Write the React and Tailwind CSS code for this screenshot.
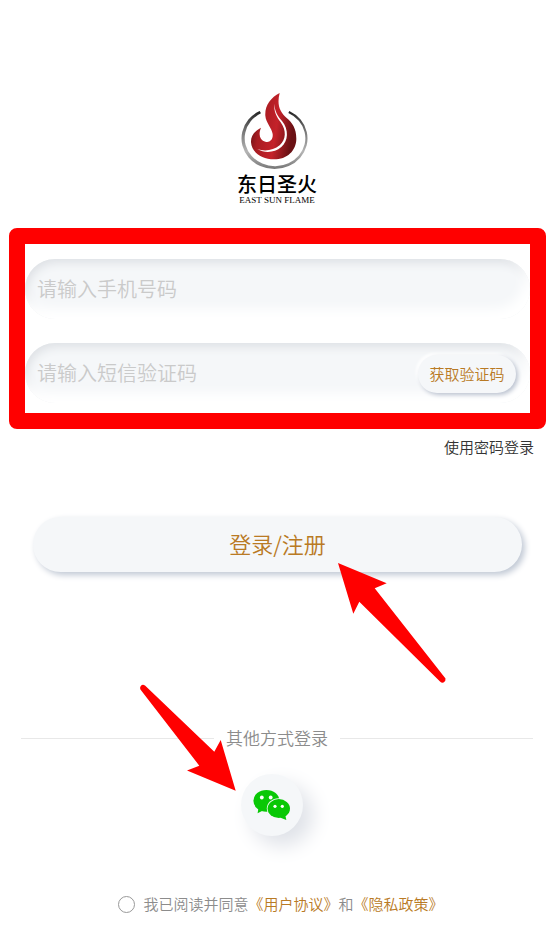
import React from 'react';

function FlameLogo() {
  return (
    <svg viewBox="54 28 207 231" className="h-[77px] w-[69px]" aria-hidden="true">
      <defs>
        <linearGradient id="ring" x1="0" y1="0" x2="0" y2="1">
          <stop offset="0" stopColor="#222" />
          <stop offset="0.35" stopColor="#777" />
          <stop offset="0.7" stopColor="#b5b5b5" />
          <stop offset="1" stopColor="#777" />
        </linearGradient>
        <linearGradient id="flame" x1="0" y1="0" x2="1" y2="0.25">
          <stop offset="0" stopColor="#4e0e12" />
          <stop offset="0.3" stopColor="#a81c22" />
          <stop offset="0.65" stopColor="#c4222a" />
          <stop offset="1" stopColor="#6a1114" />
        </linearGradient>
      </defs>
      <path d="M113 82 A99 92 0 1 0 202 82 L199 88 A91 84 0 1 1 117 89 Z" fill="url(#ring)" />
      <path
        d="M173 28 C146 42 128 66 130 96 C132 118 149 132 152 151 C154 168 143 178 130 174 C114 169 108 154 117 132 C98 142 86 156 87 176 C89 206 120 227 156 227 C195 227 223 201 223 165 C223 135 211 117 194 103 C173 85 164 63 173 28 Z"
        fill="url(#flame)"
      />
      <path
        d="M158 60 C157 82 168 98 180 112 C201 138 199 172 178 190 C158 207 130 209 106 197 C131 204 155 200 173 185 C192 168 194 141 176 116 C164 99 154 82 158 60 Z"
        fill="#fff"
      />
    </svg>
  );
}

function WechatIcon() {
  return (
    <svg viewBox="0 0 38 32" className="h-8 w-[38px]" aria-hidden="true">
      <g fill="#09c806">
        <ellipse cx="13.4" cy="11.8" rx="13" ry="10.9" />
        <path d="M5.5 19.1 L4.6 24.2 L11 21.1 Z" />
      </g>
      <ellipse cx="25.8" cy="19.6" rx="12" ry="10.3" fill="#f5f7f9" />
      <g fill="#09c806">
        <ellipse cx="25.8" cy="19.6" rx="11.2" ry="9.5" />
        <path d="M27 28.4 L33.3 30.9 L32.2 25.4 Z" />
      </g>
      <g fill="#fff">
        <circle cx="8.8" cy="8.5" r="1.9" />
        <circle cx="17.7" cy="8.5" r="1.9" />
        <circle cx="22" cy="17.3" r="1.6" />
        <circle cx="29.3" cy="17.3" r="1.6" />
      </g>
    </svg>
  );
}

const fieldClass =
  'h-15 w-full rounded-full bg-[#f5f7f9] pl-3 pb-0.5 text-xl font-[350] text-gray-700 outline-none placeholder:text-[#cacaca] shadow-[inset_-6px_-10px_12px_#ffffff,inset_2px_4px_10px_#dee1e5]';

export default function App() {
  return (
    <main
      lang="zh-CN"
      className="min-h-screen overflow-hidden bg-white pt-[93px] font-['Noto_Sans_CJK_SC',sans-serif] font-[350]"
    >
      <header className="flex flex-col items-center">
        <div className="pr-[6px]">
          <FlameLogo />
        </div>
        <h1 className="mt-1 text-xl leading-5 font-medium text-black">东日圣火</h1>
        <p className="font-['Liberation_Serif',serif] text-[9px] leading-3 font-normal text-black">EAST SUN FLAME</p>
      </header>

      <form onSubmit={(e) => e.preventDefault()}>
        <div className="mt-[22px] mr-2 ml-[9px] flex flex-col gap-6 rounded-lg border-16 border-[#ff0000] pt-[15px] pb-[10px]">
          <input type="tel" aria-label="手机号码" placeholder="请输入手机号码" className={fieldClass} />
          <div className="relative">
            <input type="text" aria-label="短信验证码" placeholder="请输入短信验证码" className={fieldClass} />
            <button
              type="button"
              className="absolute top-3 right-[14px] h-[38px] w-[98px] rounded-full bg-[#f5f7f9] text-[15px] text-[#b97a24] shadow-[2px_2px_4px_#bcc3d0,-2px_-2px_3px_#ffffff]"
            >
              获取验证码
            </button>
          </div>
        </div>

        <div className="mt-2 flex justify-end pr-5">
          <a href="#password" className="text-[15px] leading-5 text-[#333]">使用密码登录</a>
        </div>

        <div className="relative mt-[60px] mr-8 ml-[33px]">
          <button
            type="submit"
            className="h-[55px] w-full rounded-full bg-[#f5f7f9] pb-0.5 text-[22px] text-[#b97a24] shadow-[3px_3px_6px_#c0c8d4]"
          >
            登录/注册
          </button>
          <svg
            viewBox="338 563 110 122"
            className="pointer-events-none absolute top-[46px] left-1/2 ml-[60px] h-[122px] w-[110px]"
            aria-hidden="true"
          >
            <path
              d="M338 563 L386.7 583.3 L374.7 588.3 L445.5 678.5 Q446 681 443.5 682.6 Q441.5 683 440 681.5 L359.3 601.7 L353.3 613.7 Z"
              fill="#ff0000"
            />
          </svg>
        </div>
      </form>

      <section className="relative mt-[154px]">
        <div className="mx-[21px] flex items-center gap-3">
          <span className="h-px flex-1 bg-[#e8e8e8]" />
          <h2 className="text-[17px] leading-6 text-[#8c8c8c]">其他方式登录</h2>
          <span className="h-px flex-1 bg-[#e8e8e8]" />
        </div>
        <div className="mt-6 flex justify-center pr-[10px]">
          <button
            type="button"
            aria-label="微信登录"
            className="flex size-[62px] items-center justify-center rounded-full bg-[#f5f7f9] shadow-[10px_10px_20px_#dfe2e8]"
          >
            <WechatIcon />
          </button>
        </div>
        <svg
          viewBox="138 683 100 110"
          className="pointer-events-none absolute -top-[43px] left-1/2 -ml-[139px] h-[110px] w-[100px]"
          aria-hidden="true"
        >
          <path
            d="M235.7 790.7 L220.7 740 L214.3 751.7 L145 685.5 Q142.5 684 140.8 686 Q139.3 688 141 690.3 L199.3 765.7 L187 770.5 Z"
            fill="#ff0000"
          />
        </svg>
      </section>

      <footer className="mt-14 flex items-center justify-center gap-2 pb-6 pl-2 text-[15px] leading-6 text-[#8c8c8c]">
        <input
          id="agree"
          type="checkbox"
          className="size-[17px] appearance-none rounded-full border border-[#999] bg-white checked:bg-[#b97a24]"
        />
        <p>
          <label htmlFor="agree">我已阅读并同意</label>
          <a href="#terms" className="text-[#b97a24]">《用户协议》</a>
          和
          <a href="#privacy" className="text-[#b97a24]">《隐私政策》</a>
        </p>
      </footer>
    </main>
  );
}
